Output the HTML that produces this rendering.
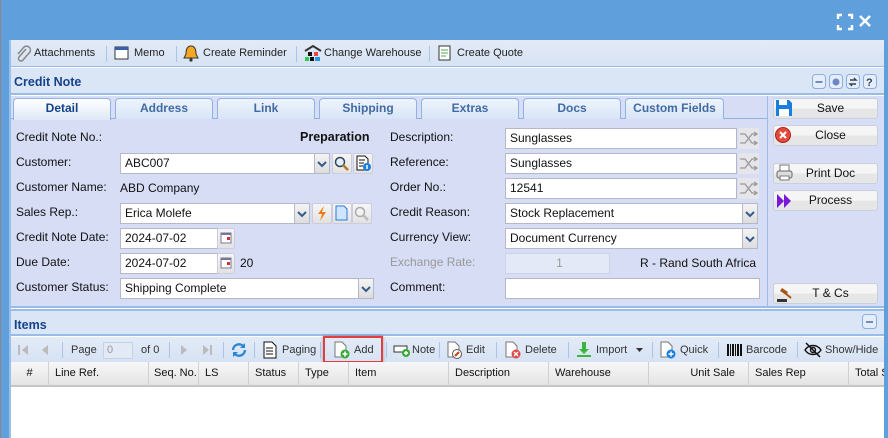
<!DOCTYPE html>
<html><head><meta charset="utf-8"><style>
*{box-sizing:border-box;margin:0;padding:0}
body{width:888px;height:438px;overflow:hidden;background:#5fa0dc;font-family:"Liberation Sans",Arial,sans-serif;font-size:12px;color:#111;position:relative}
.a{position:absolute}
.panel{left:9px;top:40px;width:875px;height:398px;background:#fff;border-left:2px solid #99c0ea}
.tb{background:linear-gradient(#e3ebf7,#d6e2f3);border-bottom:1px solid #99bbe8}
.ti{top:6px;font-size:11px;color:#222;white-space:nowrap}
.sep{width:1px;height:16px;background:#a9c5ea;top:6px}
.hdr{background:#dae6f6;border-bottom:2px solid #99bbe8;font-weight:bold;color:#15428b;font-size:12.5px}
.tab{top:98px;height:21px;width:98px;border:1px solid #8db2e3;border-bottom:none;border-radius:4px 4px 0 0;background:linear-gradient(#eef4fc,#d7e5f7);color:#416aa3;font-weight:bold;text-align:center;line-height:19px;font-size:12px}
.lbl{font-size:12px;color:#111;white-space:nowrap}
.in{height:21px;background:#fff;border:1px solid #b5b8c8;padding-left:4px;line-height:19px;font-size:12px;white-space:nowrap;overflow:hidden}
.dd{width:16px;height:21px;border:1px solid #b5b8c8;background:linear-gradient(#f4f4f4,#ddd)}
.ib{width:20px;height:21px;border:1px solid #ccd;background:linear-gradient(#f6f6f6,#e2e2e2);border-radius:2px}
.btn{left:773px;width:105px;height:21px;border:1px solid #c9cfdb;border-radius:3px;background:linear-gradient(#f5f5f5 50%,#e6e6e6 50%);text-align:center;line-height:19px;font-size:12px;padding-left:10px}
.gh{top:362px;height:25px;background:linear-gradient(#f7f7f7,#e4e4e4);border-bottom:2px solid #c5c5c5;line-height:23px;font-size:11px;border-right:1px solid #d0d0d0;padding-left:6px;white-space:nowrap;overflow:hidden}
</style></head><body>
<div class="a" style="left:0;top:0;width:1px;height:438px;background:#888"></div>
<svg class="a" style="left:836px;top:13px" width="40" height="18"><g stroke="#fff" stroke-width="2.4" fill="none"><path d="M2 6V2h4M12 2h4v4M16 12v4h-4M6 16H2v-4"/><path d="M24 3l10 10M34 3L24 13"/></g></svg>
<div class="a panel"></div>
<div class="a tb" style="left:11px;top:40px;width:873px;height:27px"></div>
<svg class="a" style="left:14px;top:45px" width="18" height="18"><path d="M12 4l-7 8a2.5 2.5 0 0 0 4 3l7-8a4 4 0 0 0-6-5l-6 7" stroke="#888" stroke-width="1.5" fill="none"/></svg>
<div class="a ti" style="left:34px;top:47px">Attachments</div>
<div class="a sep" style="left:106px;top:46px"></div>
<svg class="a" style="left:114px;top:45px" width="16" height="16"><rect x="1" y="2" width="13" height="12" fill="#fff" stroke="#333"/><rect x="1" y="2" width="13" height="3" fill="#3a5ea8"/></svg>
<div class="a ti" style="left:134px;top:47px">Memo</div>
<div class="a sep" style="left:176px;top:46px"></div>
<svg class="a" style="left:183px;top:44px" width="16" height="18"><path d="M8 2c4 0 5 4 5 8l2 4H1l2-4c0-4 1-8 5-8z" fill="#f5a623" stroke="#333" stroke-width="1"/><circle cx="8" cy="16" r="1.6" fill="#333"/></svg>
<div class="a ti" style="left:203px;top:47px">Create Reminder</div>
<div class="a sep" style="left:296px;top:46px"></div>
<svg class="a" style="left:304px;top:44px" width="18" height="18"><path d="M1 7l8-5 8 5" stroke="#333" stroke-width="2" fill="none"/><rect x="4" y="8" width="4" height="4" fill="#111"/><rect x="10" y="8" width="4" height="4" fill="#e44"/><rect x="1" y="13" width="4" height="4" fill="#2c5"/><rect x="6" y="13" width="4" height="4" fill="#111"/><rect x="11" y="13" width="5" height="4" fill="#29e"/></svg>
<div class="a ti" style="left:324px;top:47px">Change Warehouse</div>
<div class="a sep" style="left:429px;top:46px"></div>
<svg class="a" style="left:437px;top:45px" width="16" height="17"><rect x="2" y="1" width="11" height="14" fill="#fff" stroke="#333"/><path d="M4 5h7M4 8h7M4 11h5" stroke="#5a5"/></svg>
<div class="a ti" style="left:457px;top:47px">Create Quote</div>
<div class="a hdr" style="left:11px;top:68px;width:873px;height:27px;padding:7px 0 0 3px">Credit Note</div>
<svg class="a" style="left:812px;top:74px" width="68" height="16"><g fill="#e4edf9" stroke="#8aaee0"><rect x="0.5" y="0.5" width="13" height="14" rx="3"/><rect x="17.5" y="0.5" width="13" height="14" rx="3"/><rect x="34.5" y="0.5" width="13" height="14" rx="3"/><rect x="51.5" y="0.5" width="13" height="14" rx="3"/></g><path d="M3.5 8h7" stroke="#4a6fa5" stroke-width="1.5"/><circle cx="24" cy="8" r="3.5" fill="#6f86c4"/><path d="M38 6h6l-2-2M44 10h-6l2 2" stroke="#345" stroke-width="1.4" fill="none"/><text x="54" y="12" font-size="11" font-weight="bold" fill="#345" font-family="Liberation Sans">?</text></svg>
<div class="a" style="left:11px;top:96px;width:757px;height:212px;background:#d6ddf5;border-bottom:2px solid #99bbe8"></div>
<div class="a" style="left:767px;top:96px;width:117px;height:212px;background:#d6ddf5;border-left:1px solid #99bbe8;border-bottom:2px solid #99bbe8"></div>
<div class="a" style="left:11px;top:118px;width:756px;height:1px;background:#8db2e3"></div>
<div class="a tab" style="left:13px;background:linear-gradient(#fff,#dfe8f6);color:#15428b;height:22px">Detail</div>
<div class="a tab" style="left:115px">Address</div>
<div class="a tab" style="left:217px">Link</div>
<div class="a tab" style="left:319px">Shipping</div>
<div class="a tab" style="left:421px">Extras</div>
<div class="a tab" style="left:523px">Docs</div>
<div class="a tab" style="left:625px;width:99px">Custom Fields</div>
<div class="a lbl" style="left:16px;top:130px">Credit Note No.:</div>
<div class="a lbl" style="left:300px;top:130px;font-weight:bold;font-size:12.5px">Preparation</div>
<div class="a lbl" style="left:16px;top:155px">Customer:</div>
<div class="a in" style="left:120px;top:153px;width:195px">ABC007</div>
<div class="a dd" style="left:314px;top:153px"><svg width="14" height="19"><path d="M3 8l4 4 4-4" stroke="#345a8c" stroke-width="2" fill="none"/></svg></div>
<div class="a ib" style="left:332px;top:153px"><svg width="18" height="18"><circle cx="7" cy="8" r="4.5" stroke="#345" stroke-width="1.5" fill="#dfefff"/><path d="M10 11l5 5" stroke="#b07a2a" stroke-width="2.5"/></svg></div>
<div class="a ib" style="left:353px;top:153px"><svg width="18" height="18"><path d="M3 2h8l3 3v11H3z" fill="#fff" stroke="#111"/><path d="M5 6h6M5 9h5M5 12h4" stroke="#111"/><circle cx="13" cy="13" r="4" fill="#1a7ee0"/><path d="M13 11v4" stroke="#fff" stroke-width="1.5"/></svg></div>
<div class="a lbl" style="left:16px;top:180px">Customer Name:</div>
<div class="a lbl" style="left:120px;top:181px">ABD Company</div>
<div class="a lbl" style="left:16px;top:205px">Sales Rep.:</div>
<div class="a in" style="left:120px;top:203px;width:175px">Erica Molefe</div>
<div class="a dd" style="left:294px;top:203px"><svg width="14" height="19"><path d="M3 8l4 4 4-4" stroke="#345a8c" stroke-width="2" fill="none"/></svg></div>
<div class="a ib" style="left:312px;top:203px"><svg width="18" height="18"><path d="M11 2L5 10h4l-2 7 6-9H9z" fill="#f37a10"/></svg></div>
<div class="a ib" style="left:332px;top:203px"><svg width="18" height="18"><path d="M3 2h8l3 3v11H3z" fill="#cfe5ff" stroke="#2a7cd8"/></svg></div>
<div class="a ib" style="left:352px;top:203px"><svg width="18" height="18"><circle cx="7" cy="8" r="4.5" stroke="#aaa" stroke-width="1.5" fill="#f2f2f2"/><path d="M10 11l5 5" stroke="#bbb" stroke-width="2.5"/></svg></div>
<div class="a lbl" style="left:16px;top:230px">Credit Note Date:</div>
<div class="a in" style="left:120px;top:228px;width:98px">2024-07-02</div>
<div class="a ib" style="left:217px;top:228px;width:18px"><svg width="16" height="18"><rect x="3" y="4" width="10" height="10" fill="#fff" stroke="#779"/><rect x="3" y="4" width="10" height="2" fill="#779"/><rect x="9" y="8" width="3" height="3" fill="#c33"/></svg></div>
<div class="a lbl" style="left:16px;top:255px">Due Date:</div>
<div class="a in" style="left:120px;top:253px;width:98px">2024-07-02</div>
<div class="a ib" style="left:217px;top:253px;width:18px"><svg width="16" height="18"><rect x="3" y="4" width="10" height="10" fill="#fff" stroke="#779"/><rect x="3" y="4" width="10" height="2" fill="#779"/><rect x="9" y="8" width="3" height="3" fill="#c33"/></svg></div>
<div class="a lbl" style="left:240px;top:256px">20</div>
<div class="a lbl" style="left:16px;top:280px">Customer Status:</div>
<div class="a in" style="left:120px;top:278px;width:240px">Shipping Complete</div>
<div class="a dd" style="left:358px;top:278px"><svg width="14" height="19"><path d="M3 8l4 4 4-4" stroke="#345a8c" stroke-width="2" fill="none"/></svg></div>
<div class="a lbl" style="left:390px;top:130px">Description:</div>
<div class="a in" style="left:505px;top:128px;width:232px">Sunglasses</div>
<div class="a lbl" style="left:390px;top:155px">Reference:</div>
<div class="a in" style="left:505px;top:153px;width:232px">Sunglasses</div>
<div class="a lbl" style="left:390px;top:180px">Order No.:</div>
<div class="a in" style="left:505px;top:178px;width:232px">12541</div>
<svg class="a" style="left:738px;top:128px" width="22" height="72"><g fill="#e6e6ea"><rect width="21" height="21"/><rect y="25" width="21" height="21"/><rect y="50" width="21" height="21"/></g><g stroke="#999" stroke-width="1.3" fill="none"><path d="M2 6h5l7 9h5M2 15h5l7-9h5M16 4l3 2-3 2M16 13l3 2-3 2"/><path transform="translate(0,25)" d="M2 6h5l7 9h5M2 15h5l7-9h5M16 4l3 2-3 2M16 13l3 2-3 2"/><path transform="translate(0,50)" d="M2 6h5l7 9h5M2 15h5l7-9h5M16 4l3 2-3 2M16 13l3 2-3 2"/></g></svg>
<div class="a lbl" style="left:390px;top:205px">Credit Reason:</div>
<div class="a in" style="left:505px;top:203px;width:238px">Stock Replacement</div>
<div class="a dd" style="left:742px;top:203px"><svg width="14" height="19"><path d="M3 8l4 4 4-4" stroke="#345a8c" stroke-width="2" fill="none"/></svg></div>
<div class="a lbl" style="left:390px;top:230px">Currency View:</div>
<div class="a in" style="left:505px;top:228px;width:238px">Document Currency</div>
<div class="a dd" style="left:742px;top:228px"><svg width="14" height="19"><path d="M3 8l4 4 4-4" stroke="#345a8c" stroke-width="2" fill="none"/></svg></div>
<div class="a lbl" style="left:390px;top:255px;color:#999">Exchange Rate:</div>
<div class="a in" style="left:505px;top:253px;width:105px;background:#e4e9f7;border-color:#cdd3e6;color:#999;text-align:center">1</div>
<div class="a lbl" style="left:640px;top:256px">R - Rand South Africa</div>
<div class="a lbl" style="left:390px;top:280px">Comment:</div>
<div class="a in" style="left:505px;top:278px;width:255px"></div>
<div class="a btn" style="top:98px">Save</div>
<svg class="a" style="left:775px;top:99px" width="18" height="18"><path d="M1 1h13l3 3v13H1z" fill="#1a7ee0"/><rect x="4" y="1" width="8" height="5" fill="#fff"/><rect x="4" y="10" width="10" height="7" fill="#fff"/></svg>
<div class="a btn" style="top:125px">Close</div>
<svg class="a" style="left:775px;top:126px" width="18" height="18"><circle cx="8" cy="9" r="7.5" fill="#e24b3b" stroke="#a22"/><path d="M5 6l6 6M11 6l-6 6" stroke="#fff" stroke-width="2"/></svg>
<div class="a btn" style="top:163px">Print Doc</div>
<svg class="a" style="left:776px;top:164px" width="18" height="18"><rect x="4" y="1" width="9" height="6" fill="#fff" stroke="#777"/><rect x="1" y="7" width="15" height="7" rx="2" fill="#ddd" stroke="#666"/><rect x="4" y="12" width="9" height="4" fill="#fff" stroke="#777"/></svg>
<div class="a btn" style="top:190px">Process</div>
<svg class="a" style="left:776px;top:193px" width="18" height="16"><path d="M1 1l7 7-7 7zM8 1l7 7-7 7z" fill="#7a18d8"/></svg>
<div class="a btn" style="top:283px">T &amp; Cs</div>
<svg class="a" style="left:776px;top:285px" width="18" height="18"><path d="M6 3l6 4-2 3-6-4z" fill="#a6561c"/><path d="M9 8l6 5" stroke="#a6561c" stroke-width="2"/><rect x="1" y="14" width="10" height="3" fill="#333"/></svg>
<div class="a hdr" style="left:11px;top:309px;width:873px;height:27px;padding:7px 0 0 3px;border-top:2px solid #99bbe8">Items</div>
<svg class="a" style="left:862px;top:314px" width="16" height="16"><rect x="0.5" y="0.5" width="14" height="14" rx="3" fill="#e4edf9" stroke="#8aaee0"/><path d="M4 8h7" stroke="#4a6fa5" stroke-width="1.5"/></svg>
<div class="a tb" style="left:11px;top:337px;width:873px;height:25px;border-bottom:none"></div>
<svg class="a" style="left:16px;top:343px" width="220" height="14"><g fill="#bbb"><rect x="2" y="2" width="2" height="10"/><path d="M12 2l-6 5 6 5z"/><path d="M32 2l-6 5 6 5z"/></g></svg>
<div class="a sep" style="left:62px;top:342px"></div>
<div class="a ti" style="left:71px;top:344px;color:#333">Page</div>
<div class="a" style="left:103px;top:342px;width:30px;height:17px;border:1px solid #c6d2e4;background:#e2eaf6;color:#999;padding-left:3px;line-height:15px;font-size:11px">0</div>
<div class="a ti" style="left:141px;top:344px;color:#333">of 0</div>
<div class="a sep" style="left:169px;top:342px"></div>
<svg class="a" style="left:178px;top:343px" width="40" height="14"><g fill="#bbb"><path d="M3 2l6 5-6 5z"/><path d="M25 2l6 5-6 5z"/><rect x="32" y="2" width="2" height="10"/></g></svg>
<div class="a sep" style="left:223px;top:342px"></div>
<svg class="a" style="left:230px;top:341px" width="18" height="18"><path d="M3 9a6 6 0 0 1 11-3M15 9a6 6 0 0 1-11 3" stroke="#2b86d6" stroke-width="2.4" fill="none"/><path d="M15 2v5h-5zM3 16v-5h5z" fill="#2b86d6"/></svg>
<div class="a sep" style="left:254px;top:342px"></div>
<svg class="a" style="left:262px;top:341px" width="16" height="18"><path d="M2 1h8l4 4v12H2z" fill="#fff" stroke="#111"/><path d="M4 7h7M4 10h7M4 13h7" stroke="#111"/></svg>
<div class="a ti" style="left:282px;top:344px;color:#333">Paging</div>
<div class="a sep" style="left:320px;top:342px"></div>
<div class="a" style="left:323px;top:336px;width:60px;height:27px;border:2px solid #e43d3d;box-shadow:0 0 3px rgba(0,0,0,.3)"></div>
<svg class="a" style="left:333px;top:341px" width="18" height="18"><path d="M2 1h7l4 4v11H2z" fill="#fff" stroke="#777"/><circle cx="12" cy="13" r="4.5" fill="#38a838"/><path d="M12 10.5v5M9.5 13h5" stroke="#fff" stroke-width="1.6"/></svg>
<div class="a ti" style="left:354px;top:344px;color:#333">Add</div>
<div class="a sep" style="left:386px;top:342px"></div>
<svg class="a" style="left:393px;top:342px" width="18" height="16"><rect x="1" y="4" width="13" height="6" fill="#fff" stroke="#333"/><circle cx="13" cy="11" r="4" fill="#38a838"/><path d="M13 9v4M11 11h4" stroke="#fff" stroke-width="1.4"/></svg>
<div class="a ti" style="left:412px;top:344px;color:#333">Note</div>
<div class="a sep" style="left:439px;top:342px"></div>
<svg class="a" style="left:446px;top:341px" width="18" height="18"><path d="M2 1h7l4 4v11H2z" fill="#fff" stroke="#777"/><circle cx="11" cy="13" r="4.5" fill="#fff" stroke="#555"/><path d="M9 15l4-4" stroke="#d04010" stroke-width="2"/></svg>
<div class="a ti" style="left:466px;top:344px;color:#333">Edit</div>
<div class="a sep" style="left:496px;top:342px"></div>
<svg class="a" style="left:504px;top:341px" width="18" height="18"><path d="M2 1h7l4 4v11H2z" fill="#fff" stroke="#777"/><circle cx="12" cy="13" r="4.5" fill="#e34848"/><path d="M10 11l4 4M14 11l-4 4" stroke="#fff" stroke-width="1.4"/></svg>
<div class="a ti" style="left:525px;top:344px;color:#333">Delete</div>
<div class="a sep" style="left:568px;top:342px"></div>
<svg class="a" style="left:576px;top:341px" width="16" height="18"><path d="M6 1h4v7h3l-5 5-5-5h3z" fill="#3cb53c"/><rect x="1" y="14" width="14" height="2" fill="#3cb53c"/></svg>
<div class="a ti" style="left:596px;top:344px;color:#333">Import</div>
<svg class="a" style="left:636px;top:348px" width="8" height="5"><path d="M0 0h7L3.5 4z" fill="#333"/></svg>
<div class="a sep" style="left:652px;top:342px"></div>
<svg class="a" style="left:659px;top:341px" width="18" height="18"><path d="M2 1h7l4 4v11H2z" fill="#fff" stroke="#777"/><circle cx="12" cy="13" r="4.5" fill="#1a7ee0"/><path d="M12 10.5v5M9.5 13h5" stroke="#fff" stroke-width="1.4"/></svg>
<div class="a ti" style="left:680px;top:344px;color:#333">Quick</div>
<div class="a sep" style="left:718px;top:342px"></div>
<svg class="a" style="left:726px;top:342px" width="18" height="16"><g fill="#111"><rect x="1" y="2" width="2" height="12"/><rect x="4" y="2" width="1" height="12"/><rect x="6" y="2" width="2" height="12"/><rect x="9" y="2" width="1" height="12"/><rect x="11" y="2" width="2" height="12"/><rect x="14" y="2" width="2" height="12"/></g></svg>
<div class="a ti" style="left:746px;top:344px;color:#333">Barcode</div>
<div class="a sep" style="left:797px;top:342px"></div>
<svg class="a" style="left:804px;top:341px" width="18" height="18"><path d="M1 9c4-6 12-6 16 0-4 6-12 6-16 0z" fill="none" stroke="#111" stroke-width="1.4"/><circle cx="9" cy="9" r="2.5" fill="none" stroke="#111" stroke-width="1.4"/><path d="M2 2l14 14" stroke="#111" stroke-width="1.5"/></svg>
<div class="a ti" style="left:825px;top:344px;color:#333">Show/Hide</div>
<div class="a gh" style="left:11px;top:362px;width:38px;text-align:center;padding:0">#</div>
<div class="a gh" style="left:49px;width:100px">Line Ref.</div>
<div class="a gh" style="left:149px;width:50px;padding-left:5px">Seq. No.</div>
<div class="a gh" style="left:199px;width:50px">LS</div>
<div class="a gh" style="left:249px;width:50px">Status</div>
<div class="a gh" style="left:299px;width:50px">Type</div>
<div class="a gh" style="left:349px;width:100px">Item</div>
<div class="a gh" style="left:449px;width:100px">Description</div>
<div class="a gh" style="left:549px;width:100px">Warehouse</div>
<div class="a gh" style="left:649px;width:100px;text-align:right;padding-right:13px">Unit Sale</div>
<div class="a gh" style="left:749px;width:100px">Sales Rep</div>
<div class="a gh" style="left:849px;width:35px;border-right:none">Total S</div>
</body></html>
